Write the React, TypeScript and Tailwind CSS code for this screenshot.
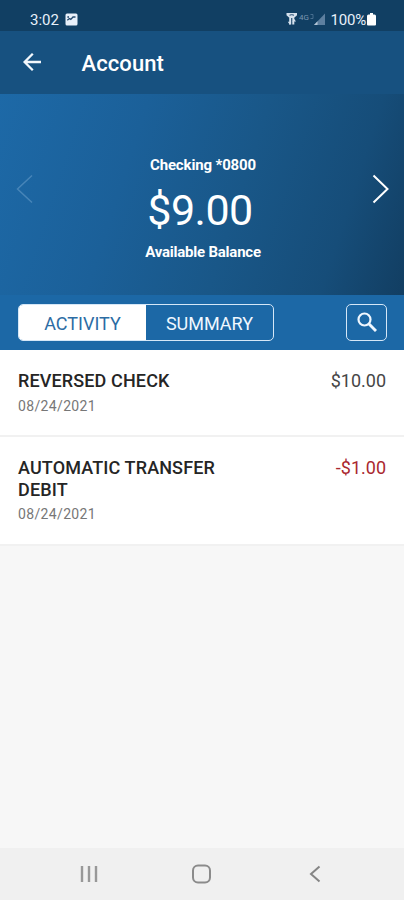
import React from "react";

type Transaction = { title: string; date: string; amount: string; debit?: boolean };

const transactions: Transaction[] = [
  { title: "REVERSED CHECK", date: "08/24/2021", amount: "$10.00" },
  { title: "AUTOMATIC TRANSFER DEBIT", date: "08/24/2021", amount: "-$1.00", debit: true },
];

function StatusBar() {
  return (
    <div className="flex h-[31px] shrink-0 items-start bg-[#113f63] pt-[10px] pl-[30px] pr-[28px] text-[15px] leading-[20px] text-[#e8f0fa]">
      <span>3:02</span>
      <svg className="mt-[3px] ml-[6px]" width="13" height="13" viewBox="0 0 13 13">
        <rect x="0.5" y="0.5" width="12" height="12" rx="1.5" fill="#e8f0fa" />
        <path d="M2.300 7.200 4.400 5.500 5.800 6.500 8 4h2.500" fill="none" stroke="#24496c" strokeWidth="1.300" />
        <path d="M2.500 3h1.300v2H2.500z" fill="#24496c" />
      </svg>
      <svg className="mt-[2px] ml-auto" width="41" height="14" viewBox="0 0 41 14">
        <path d="M0.500 1h10.500v2.300L8 6H3.500L.5 3.300z" fill="#d5e1ed" />
        <path d="M3.500 3.200Q5.700 2.200 8 3.200" fill="none" stroke="#204a70" />
        <path d="M4.200 6v6.500M7.300 6v6.500" stroke="#d5e1ed" strokeWidth="2" />
        <path d="M1.800 9.800h3.400L4 13zM6.300 9.500 8.300 7l1.700 2.500z" fill="#d5e1ed" />
        <text x="13" y="7.500" fontSize="8" fill="#7895b0">4G</text>
        <path d="M24.500 2.500h2.500v4h-2.500" fill="none" stroke="#54799b" strokeWidth="0.800" />
        <path d="M28 13 39 1.500V13z" fill="#5d7f9f" />
        <path d="M28 13 31.500 9.300V13z" fill="#b3c5d6" />
      </svg>
      <span className="ml-[4px] tracking-[-0.2px]">100%</span>
      <svg className="mt-[3px] ml-[1px]" width="9" height="13" viewBox="0 0 9 13">
        <path d="M3 0h3v1.500h1.500Q9 1.500 9 3v8.500q0 1-1 1H1q-1 0-1-1V3q0-1.500 1.500-1.500H3z" fill="#fff" />
      </svg>
    </div>
  );
}

function Header() {
  return (
    <header className="flex h-[63px] shrink-0 items-center bg-[#175180] pl-[22px] text-white">
      <svg className="mb-[2px]" width="20" height="20" viewBox="0 0 20 20" fill="none" stroke="#f2f7fc" strokeWidth="2.300">
        <path d="M19 10H2.500M10.800 1.800 2.600 10l8.200 8.200" />
      </svg>
      <h1 className="mt-[2px] ml-[39.5px] text-[22px] leading-[26px] font-medium tracking-[0.1px]">Account</h1>
    </header>
  );
}

function Hero() {
  return (
    <section className="flex h-[201px] shrink-0 items-center justify-between bg-[linear-gradient(108deg,#1d69a7_0%,#1b6099_32%,#195788_58%,#164d79_82%,#123e62_100%)] pl-[16px] pr-[14px] text-white">
      <svg className="mb-[12px]" width="18" height="30" viewBox="0 0 18 30" fill="none" stroke="#4785b8" strokeWidth="1.500">
        <path d="M16 1.500 1.500 15 16 28.500" />
      </svg>
      <div className="flex flex-col items-center pt-[28px] text-center">
        <p className="text-[15px] leading-[18px] font-bold tracking-[-0.15px]">Checking *0800</p>
        <p className="mt-[11px] mr-[6px] text-[43px] leading-[50px] tracking-[-0.5px]">$9.00</p>
        <p className="mt-[8px] text-[15px] leading-[18px] font-bold tracking-[-0.22px]">Available Balance</p>
      </div>
      <svg className="mb-[12px]" width="18" height="30" viewBox="0 0 18 30" fill="none" stroke="#fff" strokeWidth="2">
        <path d="M1.500 1.500 15.500 15 1.500 28.500" />
      </svg>
    </section>
  );
}

function Toolbar() {
  return (
    <div className="flex h-[55px] shrink-0 items-center justify-between bg-[#1c68a6] pl-[18px] pr-[17px]">
      <div className="flex h-[37px] w-[256px] overflow-hidden rounded-[5px] border border-[#d5e7f7] text-[18px]">
        <button className="w-[127px] bg-white pt-px text-[#2c6ca4]">ACTIVITY</button>
        <button className="flex-1 pt-px text-[#eff7ff]">SUMMARY</button>
      </div>
      <button className="flex h-[37px] w-[41px] items-center justify-center rounded-[5px] border border-[#d5e7f7]" aria-label="Search">
        <svg className="mb-px" width="20" height="20" viewBox="0 0 20 20" fill="none" stroke="#eff7ff">
          <circle cx="7.500" cy="7.500" r="6" strokeWidth="2.200" />
          <path d="m11.800 11.800 7.200 7.200" strokeWidth="2.900" />
        </svg>
      </button>
    </div>
  );
}

function Row({ item }: { item: Transaction }) {
  return (
    <li className="flex justify-between border-b-2 border-[#f1f1f1] bg-white px-[18px] pt-[20px] pb-[20.5px]">
      <div className="w-[220px]">
        <p className="text-[18px] leading-[21.5px] font-medium tracking-[0.13px] text-[#252525]">{item.title}</p>
        <p className="mt-[5px] text-[14px] leading-[18px] tracking-[0.35px] text-[#777]">{item.date}</p>
      </div>
      <span className={item.debit ? "text-[18px] leading-[21.5px] text-[#aa2830]" : "text-[18px] leading-[21.5px] text-[#464646]"}>
        {item.amount}
      </span>
    </li>
  );
}

function NavigationBar() {
  return (
    <nav className="grid h-[52px] shrink-0 grid-cols-3 items-center bg-[#f0f0f0] px-[32px]">
      <svg className="mx-auto" width="18" height="18" viewBox="0 0 18 18" stroke="#989898" strokeWidth="2.400">
        <path d="M2 1v16M9 1v16M16 1v16" />
      </svg>
      <svg className="mx-auto" width="20" height="20" viewBox="0 0 20 20" fill="none" stroke="#8b8b8b" strokeWidth="2">
        <rect x="1" y="1.500" width="17" height="17" rx="5" />
      </svg>
      <svg className="mx-auto" width="12" height="18" viewBox="0 0 12 18" fill="none" stroke="#858585" strokeWidth="2">
        <path d="M10.500 1.500 2 9l8.500 7.500" />
      </svg>
    </nav>
  );
}

export default function App() {
  return (
    <div className="flex h-[900px] w-[404px] flex-col overflow-hidden bg-[#f7f7f7] font-['Roboto',sans-serif]">
      <StatusBar />
      <Header />
      <Hero />
      <Toolbar />
      <ul className="flex-1">
        {transactions.map((item) => (
          <Row key={item.title} item={item} />
        ))}
      </ul>
      <NavigationBar />
    </div>
  );
}
